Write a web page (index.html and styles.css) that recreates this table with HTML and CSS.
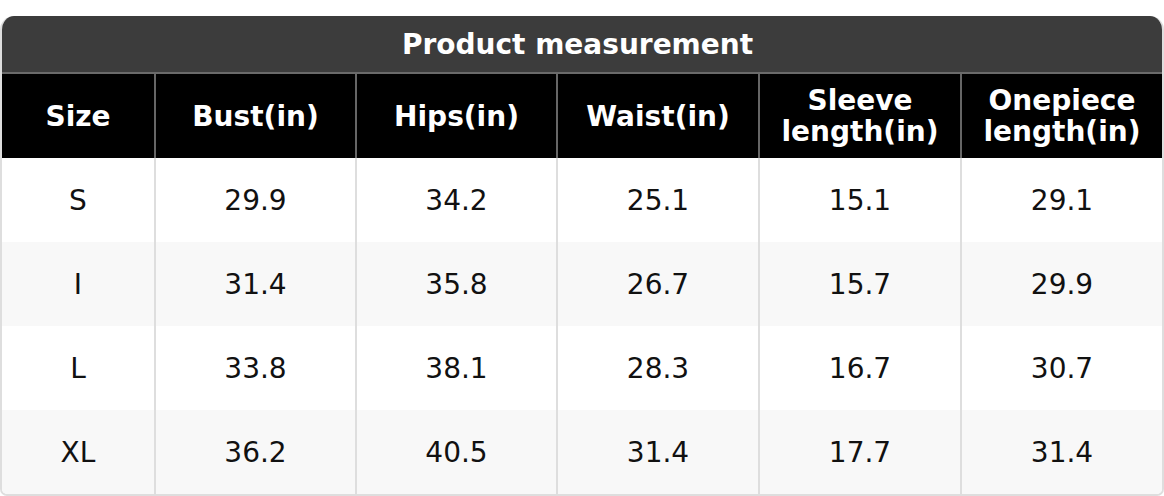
FILE: index.html
```
<!DOCTYPE html>
<html>
<head>
<meta charset="utf-8">
<link rel="stylesheet" href="styles.css">
</head>
<body>
<div class="page">
  <div class="chart">
    <div class="title">Product measurement</div>
    <div class="grid head">
      <div class="cell">Size</div>
      <div class="cell">Bust(in)</div>
      <div class="cell">Hips(in)</div>
      <div class="cell">Waist(in)</div>
      <div class="cell">Sleeve<br>length(in)</div>
      <div class="cell">Onepiece<br>length(in)</div>
    </div>
    <div class="grid row">
      <div class="cell">S</div><div class="cell">29.9</div><div class="cell">34.2</div><div class="cell">25.1</div><div class="cell">15.1</div><div class="cell">29.1</div>
    </div>
    <div class="grid row alt">
      <div class="cell">I</div><div class="cell">31.4</div><div class="cell">35.8</div><div class="cell">26.7</div><div class="cell">15.7</div><div class="cell">29.9</div>
    </div>
    <div class="grid row">
      <div class="cell">L</div><div class="cell">33.8</div><div class="cell">38.1</div><div class="cell">28.3</div><div class="cell">16.7</div><div class="cell">30.7</div>
    </div>
    <div class="grid row alt">
      <div class="cell">XL</div><div class="cell">36.2</div><div class="cell">40.5</div><div class="cell">31.4</div><div class="cell">17.7</div><div class="cell">31.4</div>
    </div>
  </div>
</div>
</body>
</html>
```
FILE: styles.css
```
html, body {
  margin: 0;
  padding: 0;
  background: #ffffff;
}
.page {
  padding-top: 16px;
  font-family: "DejaVu Sans", "Liberation Sans", sans-serif;
}
.chart {
  width: 1164px;
  box-sizing: border-box;
  border: 2px solid #dedede;
  border-top: none;
  border-radius: 14px 14px 7px 7px;
  overflow: hidden;
}
.title {
  height: 56px;
  background: #3c3c3c;
  color: #ffffff;
  font-weight: bold;
  font-size: 28px;
  display: flex;
  align-items: center;
  justify-content: center;
  padding-right: 9px;
  border-bottom: 2px solid #6a6a6a;
  margin: 0 -2px;
}
.grid {
  display: grid;
  grid-template-columns: 152px 201px 201px 202px 202px 1fr;
  height: 84px;
}
.cell {
  display: flex;
  align-items: center;
  justify-content: center;
  text-align: center;
  border-left: 2px solid #dedede;
}
.cell:first-child {
  border-left: none;
}
.head {
  background: #000000;
  color: #ffffff;
  font-weight: bold;
  font-size: 28px;
  line-height: 31px;
  margin: 0 -2px;
  padding-left: 2px;
}
.head .cell {
  border-left-color: #666666;
}
.head .cell:last-child {
  padding-right: 2px;
}
.row {
  font-size: 28px;
  color: #111111;
  background: #ffffff;
}
.row.alt {
  background: #f8f8f8;
}
```
